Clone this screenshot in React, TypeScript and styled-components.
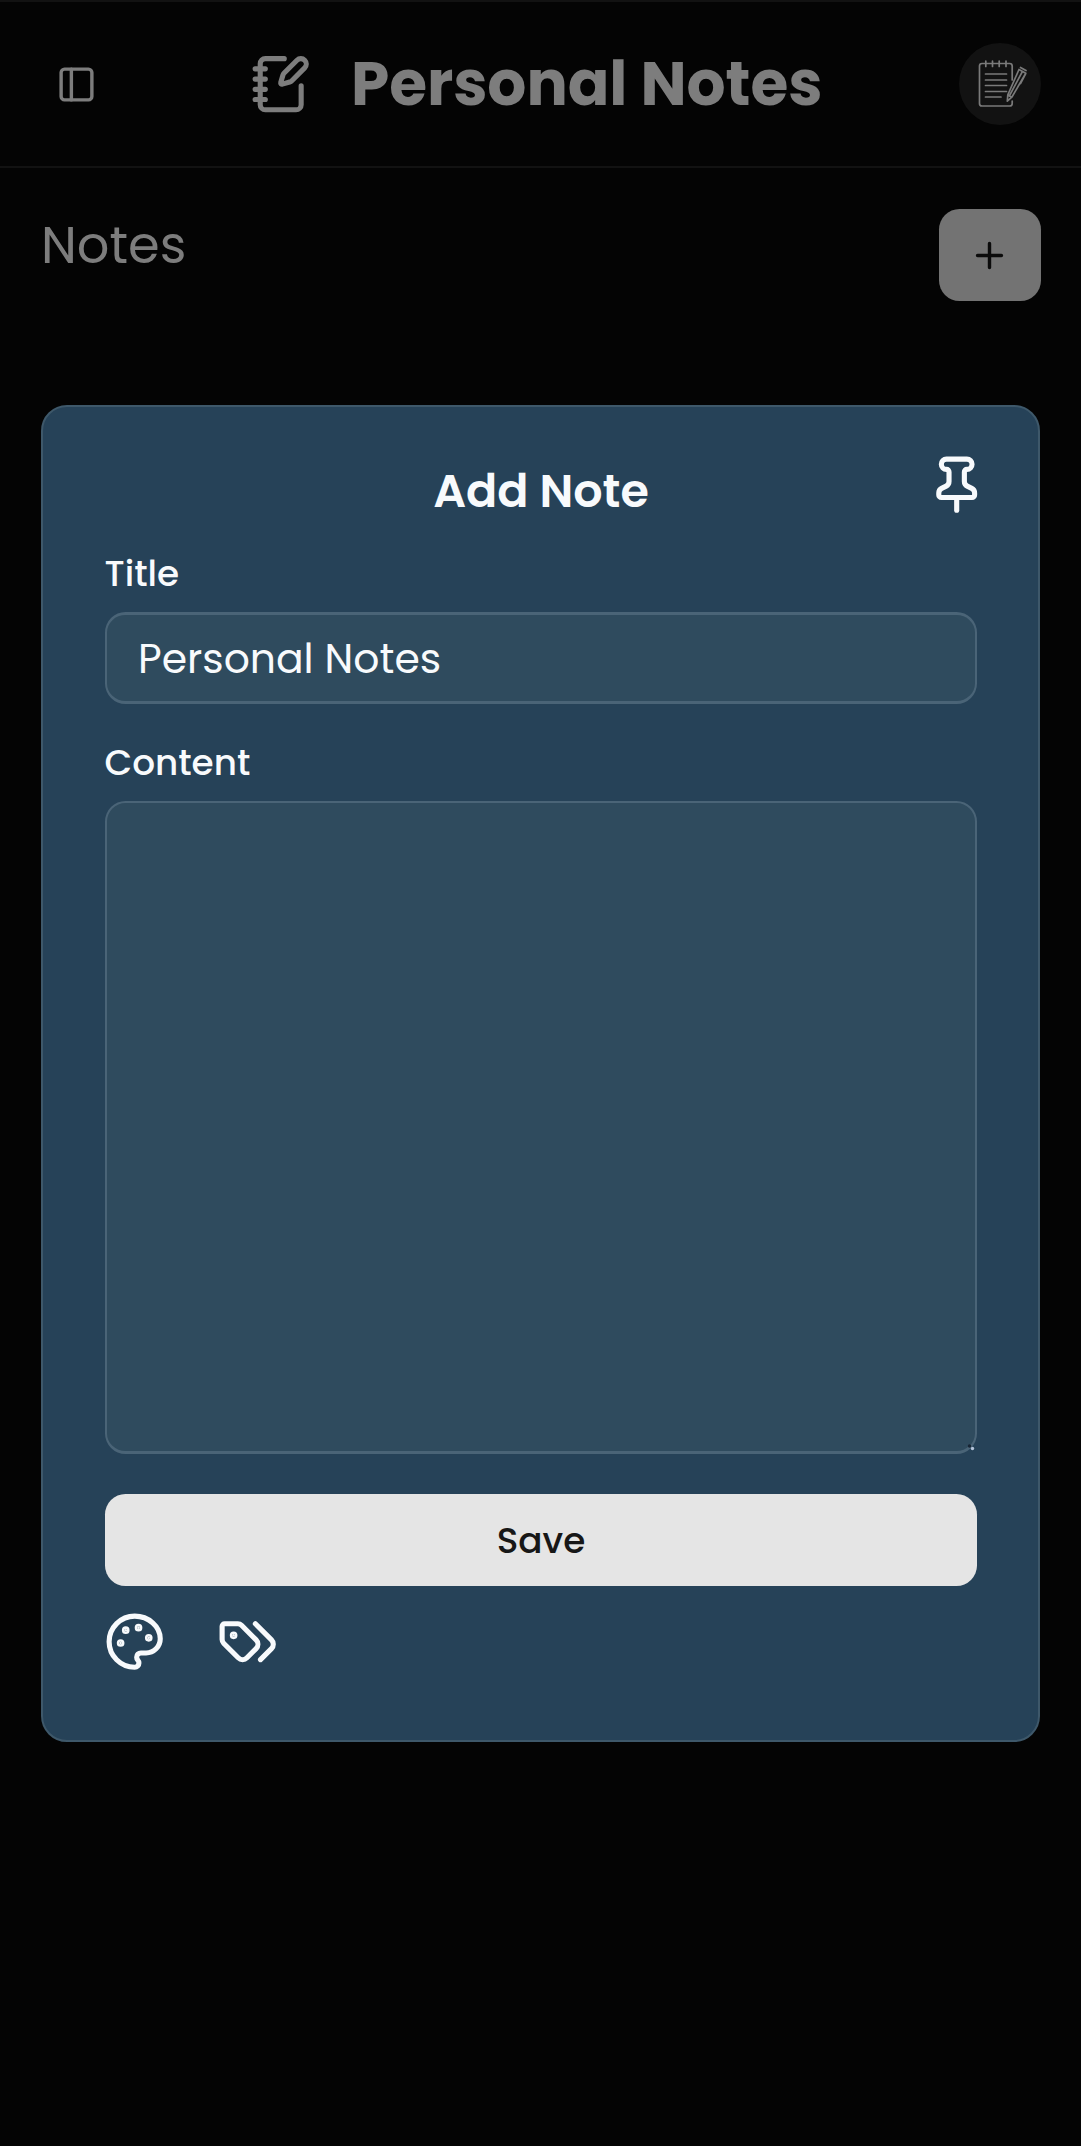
import React from "react";
import styled, { createGlobalStyle } from "styled-components";

const GlobalStyle = createGlobalStyle`
  *, *::before, *::after { box-sizing: border-box; }
  html, body { margin: 0; background: #040404; }
  body { font-family: Poppins, Inter, "Noto Sans", sans-serif; }
  h1, h2, p { margin: 0; }
`;

const Page = styled.div`
  position: relative;
  width: 1081px;
  height: 2146px;
  overflow: hidden;
  background: #040404;
  color: #7d7d7d;
`;

const Header = styled.header`
  height: 168px;
  border-top: 2px solid #121212;
  border-bottom: 2px solid #121212;
  padding: 0 40.5px 0 56px;
  display: flex;
  align-items: center;
`;

const Brand = styled.div`
  display: flex;
  align-items: center;
  gap: 39.5px;
  margin-left: 153px;
`;

const Text = styled.span<{ $size: number; $weight: number; $spacing?: number }>`
  display: block;
  font-size: ${(p) => p.$size}px;
  font-weight: ${(p) => p.$weight};
  letter-spacing: ${(p) => p.$spacing ?? 0}px;
  line-height: 1.2;
  white-space: nowrap;
`;

const BrandName = styled.h1`
  padding-bottom: 1px;
`;

const Avatar = styled.div`
  width: 82px;
  height: 82px;
  margin-left: auto;
  border-radius: 50%;
  background: #121212;
  display: flex;
  align-items: center;
  justify-content: center;
`;

const Toolbar = styled.section`
  display: flex;
  align-items: flex-start;
  justify-content: space-between;
  padding: 41px 40.5px 0 41px;
`;

const ToolbarTitle = styled.h2`
  padding-top: 6px;
`;

const AddButton = styled.button`
  width: 102px;
  height: 92px;
  padding: 0;
  border: 0;
  border-radius: 20.5px;
  background: #737373;
  color: #0b0b0b;
  display: flex;
  align-items: center;
  justify-content: center;
`;

const Dialog = styled.section`
  position: absolute;
  top: 405px;
  left: 41px;
  width: 999px;
  height: 1337px;
  padding: 47px 61px 0 62px;
  border: 2px solid #3e586a;
  border-radius: 26px;
  background: #264258;
  color: #f8fafc;
`;

const DialogHead = styled.div`
  display: grid;
  grid-template-columns: 63px 1fr 63px;
  height: 83px;
`;

const DialogTitle = styled.h2`
  justify-self: center;
  padding-top: 10px;
`;

const PinSlot = styled.div`
  margin-left: 11.5px;
`;

const Field = styled.label<{ $gap: number }>`
  display: block;
  margin-top: ${(p) => p.$gap}px;
`;

const Caption = styled.div`
  height: 75px;
  padding-top: 16px;
  margin-left: -0.5px;
`;

const Input = styled.div`
  height: 92px;
  padding: 1px 0 0 31px;
  border: solid #4a6477;
  border-width: 3px 2px;
  border-radius: 20.5px;
  background: #2f4b5e;
  display: flex;
  align-items: center;
`;

const TextArea = styled.div`
  height: 653px;
  border: solid #4a6477;
  border-width: 2px 2px 3px;
  border-radius: 20.5px;
  background: #2f4b5e;
  display: flex;
  align-items: flex-end;
  justify-content: flex-end;
`;

const SaveButton = styled.button`
  width: 100%;
  height: 92px;
  margin-top: 40px;
  padding: 3px 0 0;
  border: 0;
  border-radius: 20.5px;
  background: #e5e5e5;
  color: #171717;
  font-family: inherit;
  display: flex;
  align-items: center;
  justify-content: center;
`;

const Actions = styled.div`
  display: flex;
  gap: 51px;
  padding-top: 25px;
  margin-left: -0.7px;
`;

const Icon = styled.svg`
  display: block;
  flex: none;
  fill: none;
  stroke: currentColor;
  stroke-width: 2;
  stroke-linecap: round;
  stroke-linejoin: round;
`;

const PanelIcon = () => (
  <Icon width="41" height="41" viewBox="0 0 24 24">
    <rect x="3" y="3" width="18" height="18" rx="2" />
    <path d="M9 3v18" />
  </Icon>
);

const NotebookIcon = () => (
  <Icon width="61.4" height="61.4" viewBox="0 -0.200 24 24">
    <path d="M13.4 2H6a2 2 0 0 0-2 2v16a2 2 0 0 0 2 2h12a2 2 0 0 0 2-2v-7.4" />
    <path d="M2 6h4M2 10h4M2 14h4M2 18h4" />
    <path d="M21.378 5.626a1 1 0 1 0-3.004-3.004l-5.01 5.012a2 2 0 0 0-.506.854l-.837 2.87a.5.5 0 0 0 .62.62l2.87-.837a2 2 0 0 0 .854-.506z" />
  </Icon>
);

const PlusIcon = () => (
  <Icon width="41" height="41" viewBox="0 0 24 24">
    <path d="M5 12h14M12 5v14" />
  </Icon>
);

const PinIcon = () => (
  <Icon width="61.4" height="61.4" viewBox="0 0 24 24">
    <path d="M12 17v5" />
    <path d="M9 10.76a2 2 0 0 1-1.11 1.79l-1.78.9A2 2 0 0 0 5 15.24V16a1 1 0 0 0 1 1h12a1 1 0 0 0 1-1v-.76a2 2 0 0 0-1.11-1.79l-1.78-.9A2 2 0 0 1 15 10.76V7a1 1 0 0 1 1-1 2 2 0 0 0 0-4H8a2 2 0 0 0 0 4 1 1 0 0 1 1 1z" />
  </Icon>
);

const PaletteIcon = () => (
  <Icon width="61.4" height="61.4" viewBox="0 0 24 24">
    <circle cx="13.5" cy="6.5" r=".5" fill="currentColor" />
    <circle cx="17.5" cy="10.5" r=".5" fill="currentColor" />
    <circle cx="8.5" cy="7.5" r=".5" fill="currentColor" />
    <circle cx="6.5" cy="12.5" r=".5" fill="currentColor" />
    <path d="M12 2C6.5 2 2 6.5 2 12s4.5 10 10 10c.926 0 1.648-.746 1.648-1.688 0-.437-.18-.835-.437-1.125-.29-.289-.438-.652-.438-1.125a1.64 1.64 0 0 1 1.668-1.668h1.996c3.051 0 5.555-2.503 5.555-5.554C21.965 6.012 17.461 2 12 2z" />
  </Icon>
);

const TagsIcon = () => (
  <Icon width="61.4" height="61.4" viewBox="0 0 24 24">
    <path d="m15 5 6.3 6.3a2.4 2.4 0 0 1 0 3.4L17 19" />
    <path d="M9.586 5.586A2 2 0 0 0 8.172 5H3a1 1 0 0 0-1 1v5.172a2 2 0 0 0 .586 1.414L8.29 18.29a2.426 2.426 0 0 0 3.42 0l3.58-3.58a2.426 2.426 0 0 0 0-3.42z" />
    <circle cx="6.5" cy="9.5" r=".5" fill="currentColor" />
  </Icon>
);

const NotepadPicture = () => (
  <svg width="82" height="82" viewBox="0 0 82 82" fill="none" stroke="#7a7a7a" strokeWidth="1.7" strokeLinecap="round" strokeLinejoin="round">
    <path d="M53.2 37V23a2.500 2.500 0 0 0-2.500-2.500H23a2.500 2.500 0 0 0-2.500 2.500v37.500a2.500 2.500 0 0 0 2.500 2.500h27.700a2.500 2.500 0 0 0 2.500-2.500V58" />
    <path d="M26.800 18v5.500M33.500 18v5.500M40.200 18v5.500M47 18v5.500" />
    <path d="M26.500 31h21M26.500 37h21M26.500 42.500h21M26.500 48.500h21M26.500 54h15.500" />
    <path d="m60 26.500 6.800 3.700-14 24-4.500 4 .5-6.300zM63.400 28.500 50.300 53M61.500 24.500l5.500 3M66.500 31l-5 9.500M48.800 52l4 2.200" />
  </svg>
);

const ResizeGrip = () => (
  <svg width="10" height="10" viewBox="0 0 10 10">
    <circle cx="4.500" cy="5" r="1.700" fill="#172535" />
    <circle cx="7.500" cy="7.500" r="1.700" fill="#b4c4da" />
  </svg>
);

export default function App() {
  return (
    <>
      <GlobalStyle />
      <Page>
        <Header>
          <PanelIcon />
          <Brand>
            <NotebookIcon />
            <BrandName><Text $size={61.4} $weight={700} $spacing={-0.05}>Personal Notes</Text></BrandName>
          </Brand>
          <Avatar><NotepadPicture /></Avatar>
        </Header>
        <Toolbar>
          <ToolbarTitle><Text $size={51} $weight={400}>Notes</Text></ToolbarTitle>
          <AddButton aria-label="Add note"><PlusIcon /></AddButton>
        </Toolbar>
        <Dialog>
          <DialogHead>
            <span />
            <DialogTitle><Text $size={46} $weight={600}>Add Note</Text></DialogTitle>
            <PinSlot><PinIcon /></PinSlot>
          </DialogHead>
          <Field $gap={0}>
            <Caption><Text $size={35.8} $weight={500}>Title</Text></Caption>
            <Input><Text $size={40.9} $weight={400}>Personal Notes</Text></Input>
          </Field>
          <Field $gap={22}>
            <Caption><Text $size={35.8} $weight={500}>Content</Text></Caption>
            <TextArea><ResizeGrip /></TextArea>
          </Field>
          <SaveButton><Text $size={35.8} $weight={500}>Save</Text></SaveButton>
          <Actions>
            <PaletteIcon />
            <TagsIcon />
          </Actions>
        </Dialog>
      </Page>
    </>
  );
}
